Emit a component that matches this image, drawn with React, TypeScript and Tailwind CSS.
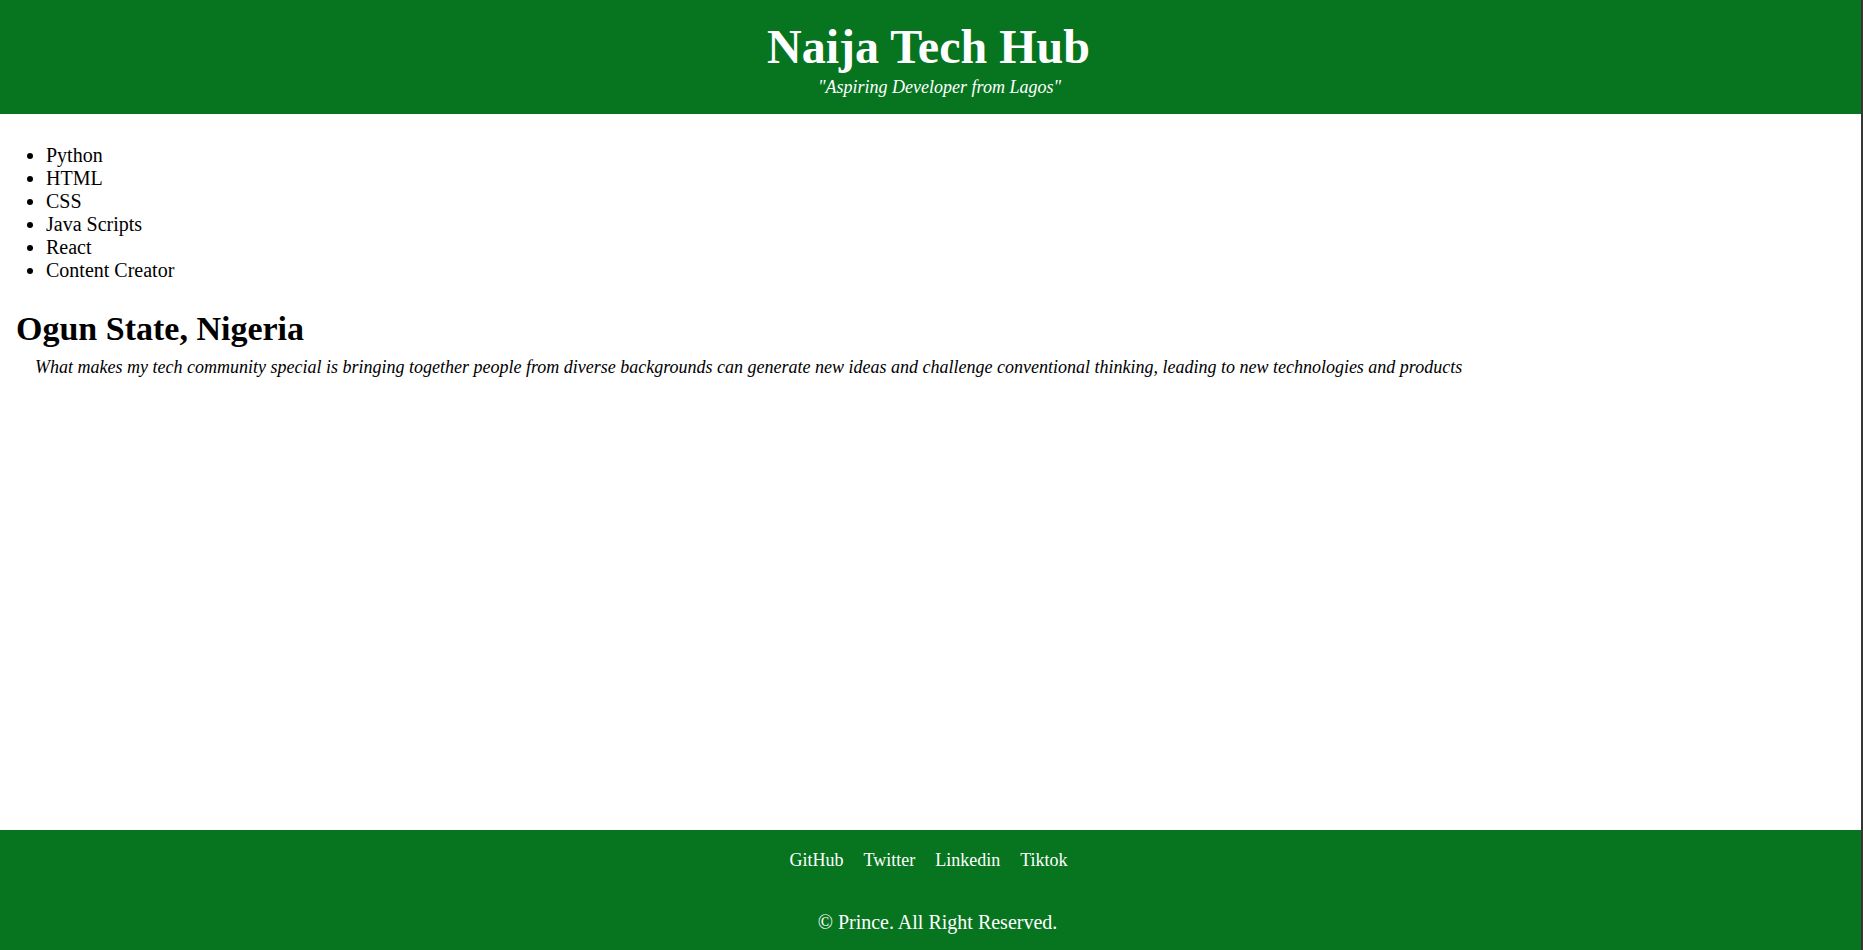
const skills = ['Python', 'HTML', 'CSS', 'Java Scripts', 'React', 'Content Creator'];

const socials = ['GitHub', 'Twitter', 'Linkedin', 'Tiktok'];

function App() {
  return (
    <div
      className="flex min-h-screen flex-col border-r-2 border-[#363636] bg-white text-black"
      style={{ fontFamily: '"Liberation Serif", "Times New Roman", serif' }}
    >
      {/* header */}
      <header className="h-[114px] bg-[#077520] pt-[19px] text-center text-white">
        <h1 className="pr-[4px] text-[48px] font-bold leading-[55px]">Naija Tech Hub</h1>
        <p className="mt-[3px] pl-[18px] text-[18px] italic leading-[20px]">"Aspiring Developer from Lagos"</p>
      </header>

      <main className="flex-1">
        <ul className="mt-[30px] list-disc pl-[46px] text-[20px] leading-[23px]">
          {skills.map((s) => (
            <li key={s}>{s}</li>
          ))}
        </ul>

        <h2 className="mt-[27px] pl-[16px] text-[34px] font-bold leading-[39px]">Ogun State, Nigeria</h2>
        <p className="mt-[9px] pl-[35px] text-[18px] italic leading-[21px]">
          What makes my tech community special is bringing together people from diverse backgrounds can generate new
          ideas and challenge conventional thinking, leading to new technologies and products
        </p>
      </main>

      {/* footer */}
      <footer className="bg-[#077520] pt-[20px] pb-[16px] text-center text-white">
        <nav className="flex justify-center gap-[20px] pr-[4px] text-[18px] leading-[21px]">
          {socials.map((s) => (
            <a key={s} href="#" className="text-white no-underline">
              {s}
            </a>
          ))}
        </nav>
        <p className="mt-[40px] pl-[14px] text-[20px] leading-[23px]">© Prince. All Right Reserved.</p>
      </footer>
    </div>
  );
}

export default App;
